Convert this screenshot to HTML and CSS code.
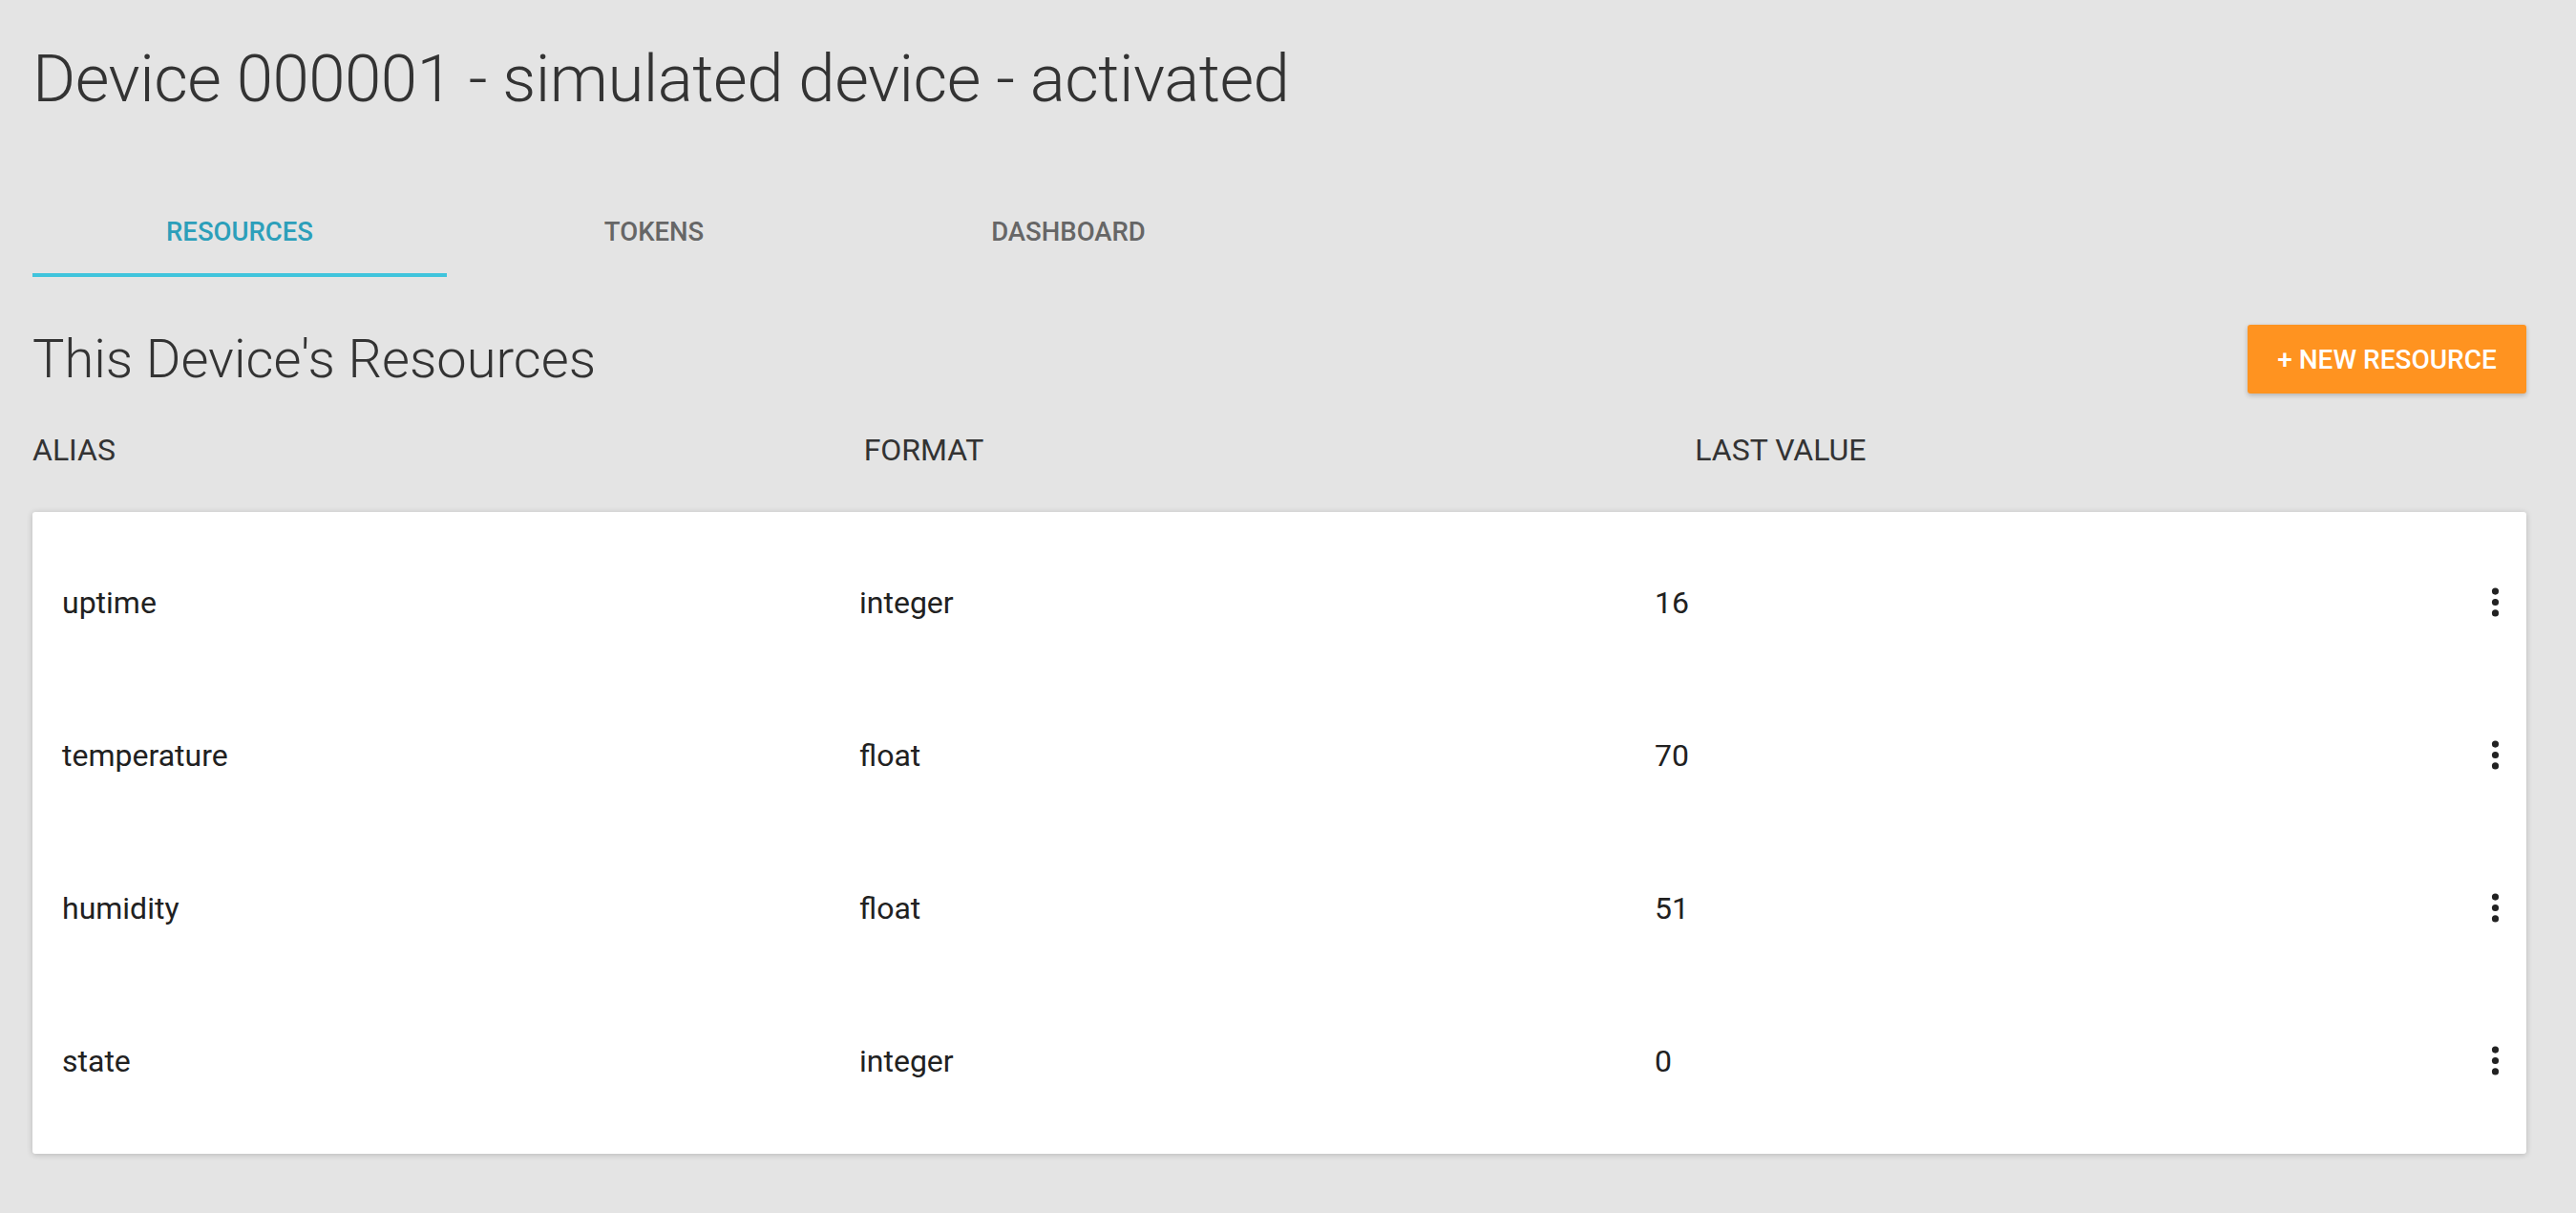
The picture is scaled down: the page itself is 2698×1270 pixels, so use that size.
FILE: index.html
```html
<!DOCTYPE html>
<html>
<head>
<meta charset="utf-8">
<title>Device 000001</title>
<link rel="stylesheet" href="styles.css">
</head>
<body>
<div class="page">
  <h1 class="title">Device 000001 - simulated device - activated</h1>
  <div class="tabs">
    <div class="tab active">RESOURCES</div>
    <div class="tab">TOKENS</div>
    <div class="tab">DASHBOARD</div>
  </div>
  <div class="section-head">
    <h2 class="section-title">This Device's Resources</h2>
    <button class="new-btn">+ NEW RESOURCE</button>
  </div>
  <div class="col-heads">
    <div>ALIAS</div>
    <div>FORMAT</div>
    <div>LAST VALUE</div>
  </div>
  <div class="card">
    <div class="row"><div>uptime</div><div>integer</div><div>16</div><div class="kebab"><svg viewBox="0 0 24 24" width="41" height="41"><circle cx="12" cy="5.3" r="2.1"/><circle cx="12" cy="12" r="2.1"/><circle cx="12" cy="18.7" r="2.1"/></svg></div></div>
    <div class="row"><div>temperature</div><div>float</div><div>70</div><div class="kebab"><svg viewBox="0 0 24 24" width="41" height="41"><circle cx="12" cy="5.3" r="2.1"/><circle cx="12" cy="12" r="2.1"/><circle cx="12" cy="18.7" r="2.1"/></svg></div></div>
    <div class="row"><div>humidity</div><div>float</div><div>51</div><div class="kebab"><svg viewBox="0 0 24 24" width="41" height="41"><circle cx="12" cy="5.3" r="2.1"/><circle cx="12" cy="12" r="2.1"/><circle cx="12" cy="18.7" r="2.1"/></svg></div></div>
    <div class="row"><div>state</div><div>integer</div><div>0</div><div class="kebab"><svg viewBox="0 0 24 24" width="41" height="41"><circle cx="12" cy="5.3" r="2.1"/><circle cx="12" cy="12" r="2.1"/><circle cx="12" cy="18.7" r="2.1"/></svg></div></div>
  </div>
</div>
</body>
</html>
```

FILE: styles.css
```css
html, body {
  margin: 0;
  padding: 0;
  background: #e4e4e4;
  font-family: Roboto, "Liberation Sans", sans-serif;
  color: #333;
}
.page {
  padding: 42px 52px 40px 34px;
}
.title {
  margin: 0;
  font-size: 69px;
  font-weight: 300;
  letter-spacing: -0.5px;
  line-height: normal;
  color: #333;
}
.tabs {
  display: flex;
  margin-top: 84px;
}
.tab {
  width: 434px;
  height: 83px;
  box-sizing: border-box;
  padding-top: 19px;
  text-align: center;
  font-size: 27.5px;
  font-weight: 500;
  line-height: normal;
  color: #666;
  border-bottom: 4px solid transparent;
}
.tab.active {
  color: #2c9fba;
  border-bottom-color: #40c4dc;
}
.section-head {
  display: flex;
  align-items: center;
  justify-content: space-between;
  margin-top: 50px;
  height: 72px;
}
.section-title {
  margin: 0;
  font-size: 56px;
  font-weight: 300;
  line-height: normal;
  color: #333;
}
.new-btn {
  width: 292px;
  height: 72px;
  border: none;
  border-radius: 3px;
  background: #ff9320;
  color: #fff;
  font-family: Roboto, "Liberation Sans", sans-serif;
  font-size: 28px;
  font-weight: 500;
  box-shadow: 0 2px 5px rgba(0,0,0,0.22);
  padding: 0;
}
.col-heads {
  display: grid;
  grid-template-columns: 1fr 1fr 1fr;
  margin-top: 40px;
  font-size: 32px;
  line-height: normal;
  color: #333;
}
.card {
  margin-top: 46px;
  background: #fff;
  border-radius: 3px;
  box-shadow: 0 1px 6px rgba(0,0,0,0.2);
  padding: 16px 0;
}
.row {
  display: grid;
  grid-template-columns: 835px 833px 1fr 41px;
  align-items: center;
  height: 160px;
  box-sizing: border-box;
  padding: 0 12px 3px 31px;
  font-size: 32px;
  color: #212121;
}
.kebab {
  display: flex;
  align-items: center;
  justify-content: center;
}
.kebab svg {
  fill: #222;
  display: block;
}
```
